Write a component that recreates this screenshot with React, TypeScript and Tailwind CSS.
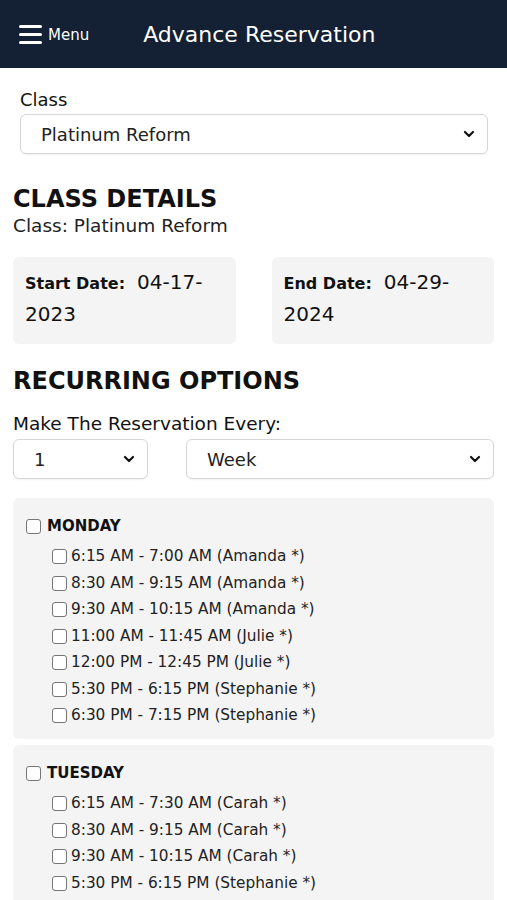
import React from "react";

const monday = [
  "6:15 AM - 7:00 AM (Amanda *)",
  "8:30 AM - 9:15 AM (Amanda *)",
  "9:30 AM - 10:15 AM (Amanda *)",
  "11:00 AM - 11:45 AM (Julie *)",
  "12:00 PM - 12:45 PM (Julie *)",
  "5:30 PM - 6:15 PM (Stephanie *)",
  "6:30 PM - 7:15 PM (Stephanie *)",
];

const tuesday = [
  "6:15 AM - 7:30 AM (Carah *)",
  "8:30 AM - 9:15 AM (Carah *)",
  "9:30 AM - 10:15 AM (Carah *)",
  "5:30 PM - 6:15 PM (Stephanie *)",
];

const Chevron = () => (
  <svg width="12" height="8" viewBox="0 0 12 8" fill="none">
    <path d="M2 2l4 4 4-4" stroke="#111" strokeWidth="2.2" strokeLinecap="round" strokeLinejoin="round" />
  </svg>
);

const Select = ({ value, className }: { value: string; className?: string }) => (
  <div
    className={`flex h-10 items-center justify-between rounded-md border border-[#d6d6d6] bg-white pl-5 pr-3 text-[18px] text-[#222] shadow-[0_1px_2px_rgba(0,0,0,0.06)] ${className ?? ""}`}
  >
    <span>{value}</span>
    <Chevron />
  </div>
);

const Box = () => (
  <span className="inline-block h-[15px] w-[15px] shrink-0 rounded-[3px] border border-[#767676] bg-white" />
);

const DayCard = ({ day, slots }: { day: string; slots: string[] }) => (
  <div className="rounded-md bg-[#f4f4f4] pb-[10px] pl-[13px] pr-3 pt-[17px]">
    <div className="flex items-center gap-[6px]">
      <Box />
      <span className="text-[15px] font-semibold text-[#111]">{day}</span>
    </div>
    <div className="mt-[6px] flex flex-col pl-[26px]">
      {slots.map((s) => (
        <label key={s} className="flex h-[26.5px] items-center gap-[4px] text-[15.3px] text-[#222]">
          <Box />
          {s}
        </label>
      ))}
    </div>
  </div>
);

export default function App() {
  return (
    <div className="min-h-[900px] bg-white font-['DejaVu_Sans',sans-serif] text-[#111]">
      {/* Header */}
      <div className="flex h-[68px] items-center bg-[#142033] pl-[19px] text-white">
        <div className="flex items-center gap-[6px]">
          <div className="flex w-[23px] flex-col gap-[5px]">
            <span className="h-[3px] rounded-sm bg-white" />
            <span className="h-[3px] rounded-sm bg-white" />
            <span className="h-[3px] rounded-sm bg-white" />
          </div>
          <span className="mt-[3px] text-[15px]">Menu</span>
        </div>
        <h1 className="ml-[54px] text-[22px]">Advance Reservation</h1>
      </div>

      <div className="px-[13px]">
        {/* Class select */}
        <div className="pl-[7px] pr-[6px] pt-[19px]">
          <div className="text-[18px] leading-[26px]">Class</div>
          <Select value="Platinum Reform" className="mt-[1px]" />
        </div>

        {/* Class details */}
        <h2 className="mt-[31px] text-[24px] font-semibold leading-[28px]">CLASS DETAILS</h2>
        <div className="mt-[1px] text-[18.5px] leading-[24px] text-[#222]">Class: Platinum Reform</div>

        <div className="mt-[19px] grid grid-cols-2 gap-9">
          <div className="rounded-md bg-[#f4f4f4] px-3 pb-[13px] pt-[10px] leading-[31px]">
            <span className="text-[16px] font-semibold">Start Date:</span>
            <span className="ml-3 text-[20px]">04-17-2023</span>
          </div>
          <div className="rounded-md bg-[#f4f4f4] px-3 pb-[13px] pt-[10px] leading-[31px]">
            <span className="text-[16px] font-semibold">End Date:</span>
            <span className="ml-3 text-[20px]">04-29-2024</span>
          </div>
        </div>

        {/* Recurring */}
        <h2 className="mt-[22px] text-[24px] font-semibold leading-[30px]">RECURRING OPTIONS</h2>
        <div className="mt-[15px] text-[18.5px] leading-[26px]">Make The Reservation Every:</div>
        <div className="mt-[2px] flex gap-[38px]">
          <Select value="1" className="w-[135px]" />
          <Select value="Week" className="flex-1" />
        </div>

        <div className="mt-[19px] flex flex-col gap-[6px]">
          <DayCard day="MONDAY" slots={monday} />
          <DayCard day="TUESDAY" slots={tuesday} />
        </div>
      </div>
    </div>
  );
}
